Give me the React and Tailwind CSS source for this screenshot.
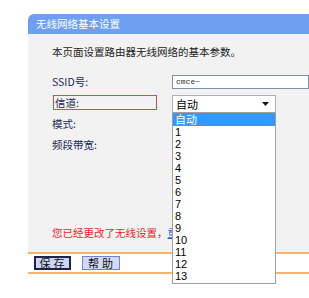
const font = { fontFamily: '"Noto Sans CJK SC", "Liberation Sans", sans-serif' };

const channels = ["1", "2", "3", "4", "5", "6", "7", "8", "9", "10", "11", "12", "13"];

export default function App() {
  return (
    <div className="w-[309px] h-[298px] bg-white overflow-hidden pt-[14px] pl-[28px]" style={font}>
      {/* Title bar */}
      <div className="h-[20px] rounded-tl-[6px] bg-[#6e9ff0] text-white text-[10.5px] leading-[20px] pl-[8px]">
        无线网络基本设置
      </div>

      {/* Panel */}
      <div className="h-[218px] bg-[#f2f2f2] pl-[24px] pt-[11px] text-[10.5px] leading-[14px]">
        <p className="text-[#222]">本页面设置路由器无线网络的基本参数。</p>

        <div className="mt-[12px] text-[#20285a]">
          <div className="h-[21px] flex items-center">
            <span className="w-[120px]">SSID号:</span>
            <div className="h-[14px] flex-1 border border-[#7f8fa8] bg-white pl-[3px] text-[8px] leading-[12px] text-[#333] font-['Liberation_Mono',monospace]">
              cmce~
            </div>
          </div>

          <div className="h-[21px] flex items-center">
            <span className="w-[104px] h-[15px] ml-[1px] mr-[15px] border border-[#e04848] pl-[1px] leading-[13px]">信道:</span>
            <div className="relative w-[104px] mt-[2px]">
              <div className="h-[18px] border border-[#a8b0bc] bg-white flex items-center justify-between pl-[3px] pr-[6px] text-[11px] text-black">
                <span>自动</span>
                <svg width="7" height="4" viewBox="0 0 7 4">
                  <path d="M0 0h7L3.5 4z" fill="#111" />
                </svg>
              </div>
              <div className="absolute left-0 top-[17px] w-[104px] border border-[#a0a0a0] bg-white text-[11px] leading-[12px] text-black font-['Liberation_Sans',sans-serif] z-10 pb-[1px]">
                <div className="h-[13px] bg-[#3399ff] text-white pl-[2px] leading-[13px]" style={font}>自动</div>
                {channels.map((c) => (
                  <div key={c} className="h-[12px] pl-[2px]">{c}</div>
                ))}
              </div>
            </div>
          </div>

          <div className="h-[21px] flex items-center">
            <span>模式:</span>
          </div>
          <div className="h-[21px] flex items-center">
            <span>频段带宽:</span>
          </div>
        </div>

        <p className="mt-[71px] whitespace-nowrap">
          <span className="text-[#e8262a]">您已经更改了无线设置，</span>
          <span className="text-[#1d5fd0] underline">重启后生效。</span>
        </p>
      </div>

      {/* Buttons */}
      <div className="h-[22px] border-t-2 border-b-2 border-[#f4b470] bg-white flex items-center gap-[11px] pl-[6px] text-[11px]">
        <button className="w-[37px] h-[14px] border-2 border-[#1c2550] bg-[#cdd5f3] text-[#111] leading-[10px] tracking-[3px] pl-[2px]">
          保存
        </button>
        <button className="w-[38px] h-[14px] border border-[#6f84d6] bg-[#d3daf6] text-[#111] leading-[12px] tracking-[3px] pl-[2px]">
          帮助
        </button>
      </div>
    </div>
  );
}
